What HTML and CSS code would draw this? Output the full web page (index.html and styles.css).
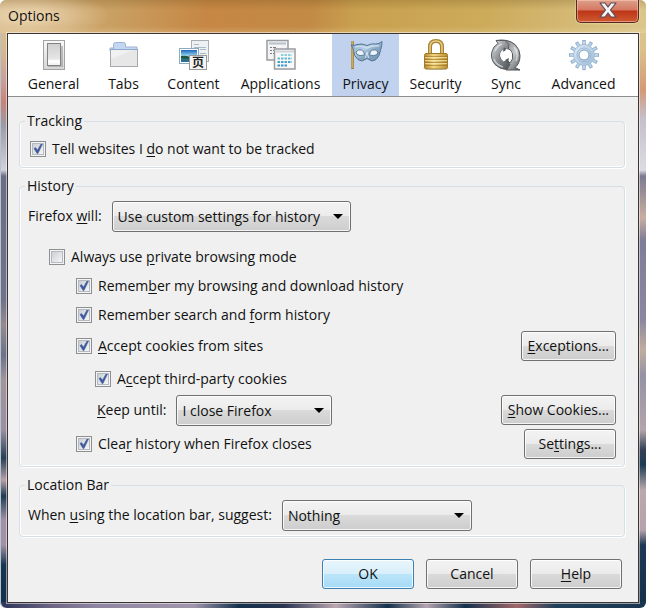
FILE: index.html
```html
<!DOCTYPE html>
<html lang="en">
<head>
  <meta charset="UTF-8" />
  <meta name="viewport" content="width=device-width, initial-scale=1.0" />
  <title>Options</title>
  <link rel="stylesheet" href="styles.css">
</head>
<body>
  <div class="window">
    <header class="titlebar">
      <h1>Options</h1>
      <button type="button" class="close" aria-label="Close">
        <svg width="20" height="18" viewBox="0 0 20 18">
          <path d="M2 2h5l3 4 3-4h5l-5.500 7 5.500 7h-5l-3-4-3 4H2l5.500-7z" fill="#f4f4f4" stroke="#5d4a55" stroke-width="1.200" stroke-linejoin="round"/>
        </svg>
      </button>
    </header>

    <main class="client">
      <nav class="tabs">
        <button type="button" class="tab">
          <svg width="32" height="32" viewBox="0 0 32 32">
            <defs>
              <linearGradient id="plate" x2="0" y2="1"><stop offset="0" stop-color="#f8f8f8"/><stop offset="1" stop-color="#d6d6d6"/></linearGradient>
              <linearGradient id="rocker" x2="0" y2="1"><stop offset="0" stop-color="#cfcfcf"/><stop offset=".7" stop-color="#e6e6e6"/><stop offset=".8" stop-color="#fff"/><stop offset="1" stop-color="#eee"/></linearGradient>
            </defs>
            <rect x="5.500" y="1.500" width="21" height="29" fill="url(#plate)" stroke="#a2a2a2"/>
            <path d="M10 27h14V7" fill="none" stroke="#999" stroke-width="2" opacity=".6"/>
            <rect x="9.500" y="4.500" width="13" height="22" fill="url(#rocker)" stroke="#838383"/>
            <path d="M10 22.500h12" stroke="#fff" stroke-width="2"/>
          </svg>
          <span>General</span>
        </button>
        <button type="button" class="tab">
          <svg width="32" height="32" viewBox="0 0 32 32">
            <path d="M5.500 11V5.500q0-2 2-2h8q2 0 2 2V8h11.500v4h-27V9h3.500z" fill="#c3d7f2" stroke="#9fb3d0"/>
            <rect x="2.500" y="10.500" width="27" height="17" fill="#f1f1f1" stroke="#a5a8ad"/>
            <path d="M3 27V20L25 11h4v16z" fill="#e5e5e5" opacity=".8"/>
            <path d="M2 10.500h28" stroke="#8da9cf"/>
          </svg>
          <span>Tabs</span>
        </button>
        <button type="button" class="tab">
          <svg width="32" height="32" viewBox="0 0 32 32">
            <defs>
              <linearGradient id="photo" x2="0" y2="1"><stop offset="0" stop-color="#1d66bd"/><stop offset=".5" stop-color="#9cdcf2"/><stop offset=".6" stop-color="#2f7a54"/><stop offset="1" stop-color="#2b6da8"/></linearGradient>
            </defs>
            <rect x="13.500" y="1.500" width="17" height="21" fill="#eef1f3" stroke="#a7adb2"/>
            <path d="M16 5.500h5M16 8.500h12M22 10.500h6M22 14.500h6M22 17.500h6" stroke="#a9b8c4"/>
            <rect x="1.500" y="9.500" width="19" height="15" fill="#fff" stroke="#8eaac0"/>
            <rect x="3" y="11" width="16" height="12" fill="url(#photo)"/>
            <path d="M3 17q5-1 8 1t8-2v2q-6 3-16 1z" fill="#1f5547"/>
            <rect x="11.500" y="16.500" width="17" height="14" fill="#f5f5f5" stroke="#999"/>
            <text x="20" y="28" class="glyph" text-anchor="middle">页</text>
          </svg>
          <span>Content</span>
        </button>
        <button type="button" class="tab">
          <svg width="32" height="32" viewBox="0 0 32 32">
            <rect x="2" y="1.500" width="21" height="19.500" fill="#f4f4f4" stroke="#999b9f" stroke-width="1.500"/>
            <path d="M4 4.500h17" stroke="#b9bfc6" stroke-width="2"/>
            <path d="M5 8.500h2M8 8.500h3M5 11.500h2M8 11.500h3M5 14.500h2M8 14.500h3" stroke="#778"/>
            <rect x="9.500" y="10" width="20.500" height="20" fill="#f8f8f8" stroke="#999b9f" stroke-width="1.500"/>
            <path d="M11 12.500h18" stroke="#cfd4da" stroke-width="2"/>
            <g fill="none" stroke-width="2" stroke-dasharray="2.500 1">
              <path d="M16 16h11" stroke="#8bd1dc"/>
              <path d="M12.500 19.500h14.500" stroke="#67bcd2"/>
              <path d="M12.500 23h14.500" stroke="#47a3cb"/>
              <path d="M12.500 26.500h10.500" stroke="#3793c9"/>
            </g>
          </svg>
          <span>Applications</span>
        </button>
        <button type="button" class="tab selected">
          <svg width="34" height="32" viewBox="0 0 34 32">
            <defs>
              <linearGradient id="mask" x2="1" y2="1"><stop offset="0" stop-color="#7f9dbb"/><stop offset=".4" stop-color="#b4cfe3"/><stop offset=".6" stop-color="#86a6c2"/><stop offset="1" stop-color="#7193b2"/></linearGradient>
            </defs>
            <path d="M3.500 2v28" stroke="#96742a" stroke-width="2.500"/>
            <path d="M3.200 2v27" stroke="#e8c566"/>
            <path d="M2 6q3 1 6-.5 5-1.500 10 1 5-2.500 9-1.500 3 0 6-2.500 0 5-1.500 9-1 6-4.500 9-4 3-7 0-2-2-4 0-3 3-7 0-4-3-4.500-9Q4 8 2 6z" fill="url(#mask)" stroke="#547493"/>
            <path d="M6 8q6-2 12 1 6-3 12-2" fill="none" stroke="#d3e4f1" stroke-width="1.500" opacity=".8"/>
            <path d="M7 13q2-3 5.500-2 3 1 3 5-5 1.500-7.500-.5zM20.500 16q0-4 3-5 3.500-1 5.500 2l-1 2.500q-2.500 2-7.500.5z" fill="#eef4fc" stroke="#5a7a99"/>
            <path d="M16.500 19l1.500-6 1.500 6" fill="none" stroke="#d5e5f2"/>
          </svg>
          <span>Privacy</span>
        </button>
        <button type="button" class="tab">
          <svg width="32" height="32" viewBox="0 0 32 32">
            <defs>
              <linearGradient id="brass" x2="1" y2="0"><stop offset="0" stop-color="#b78a2b"/><stop offset=".4" stop-color="#f2d884"/><stop offset="1" stop-color="#b98d2e"/></linearGradient>
            </defs>
            <path d="M10 17V8q0-6 6-6t6 6v9" fill="none" stroke="#a88233" stroke-width="4"/>
            <path d="M10 17V8q0-6 6-6t6 6v9" fill="none" stroke="#ead08a" stroke-width="1.500"/>
            <ellipse cx="16" cy="29.500" rx="13" ry="1.500" fill="#aaa" opacity=".5"/>
            <path d="M6 14.500h20q1.500 0 1.500 2V28q0 2-2 2h-19q-2 0-2-2V16.500q0-2 1.500-2z" fill="url(#brass)" stroke="#a07a28"/>
            <path d="M5 17.500h22M5 20.500h22M5 23.500h22M5 26.500h22" stroke="#997022" opacity=".6"/>
            <path d="M5 18.500h22M5 21.500h22M5 24.500h22" stroke="#faeab0" opacity=".7"/>
          </svg>
          <span>Security</span>
        </button>
        <button type="button" class="tab">
          <svg width="32" height="32" viewBox="0 0 32 32">
            <defs>
              <linearGradient id="steel" x2="1" y2="1"><stop offset="0" stop-color="#e5e7e9"/><stop offset=".5" stop-color="#8b8e92"/><stop offset="1" stop-color="#4b4e52"/></linearGradient>
              <linearGradient id="steel2" x2="1" y2="1"><stop offset="0" stop-color="#6b6e72"/><stop offset=".6" stop-color="#c4c7ca"/><stop offset="1" stop-color="#55585c"/></linearGradient>
            </defs>
            <path d="M6 1.500q12-2 19 4 5 5 5 11 0 8-5 12l5 2.500H16l2-9 2 2q4-4 2.500-9-1-5-6-6V13L9 8l6-5z" fill="url(#steel2)" stroke="#4f5255"/>
            <path d="M6 1.500h9l4 4-1 6-3-2q-5 2-5 7 0 4 4 7l2-3 4 5-3 5q-7 0-12-5-5-6-3-13 1-5 6-8z" fill="url(#steel)" stroke="#5a5d60"/>
            <path d="M5 12q2-5 7-7M4 20q2 6 9 8M24 8q5 6 2 14" fill="none" stroke="#f1f2f3" stroke-width="1.500" opacity=".6"/>
            <circle cx="16" cy="16" r="6" fill="#fff"/>
            <path d="M14 8l-1 5 3-2zM18 24l1-5-4 2z" fill="#55585c"/>
          </svg>
          <span>Sync</span>
        </button>
        <button type="button" class="tab">
          <svg width="32" height="32" viewBox="0 0 32 32">
            <defs>
              <linearGradient id="gear" x2="1" y2="1"><stop offset="0" stop-color="#dfecf8"/><stop offset="1" stop-color="#9dbad6"/></linearGradient>
            </defs>
            <g stroke="#8fadc9" stroke-width="3.500">
              <path d="M16 1v30M1 16h30"/>
              <path d="M16 1v30M1 16h30" transform="rotate(30 16 16)"/>
              <path d="M16 1v30M1 16h30" transform="rotate(60 16 16)"/>
            </g>
            <g stroke="#bdd4e9" stroke-width="2">
              <path d="M16 2v28M2 16h28"/>
              <path d="M16 2v28M2 16h28" transform="rotate(30 16 16)"/>
              <path d="M16 2v28M2 16h28" transform="rotate(60 16 16)"/>
            </g>
            <circle cx="16" cy="16" r="10.500" fill="url(#gear)" stroke="#a5c0d9"/>
            <circle cx="16" cy="16" r="7" fill="none" stroke="#9cb9d4"/>
            <circle cx="16" cy="16" r="5" fill="#fff" stroke="#809fbd"/>
          </svg>
          <span>Advanced</span>
        </button>
      </nav>

      <form class="panel">
        <fieldset>
          <legend>Tracking</legend>
          <div class="row">
            <label class="check"><input type="checkbox" checked /> <span>Tell websites I <u>d</u>o not want to be tracked</span></label>
          </div>
        </fieldset>

        <fieldset>
          <legend>History</legend>
          <div class="row">
            <label for="historyMode">Firefox <u>w</u>ill:</label>
            <select id="historyMode" class="history-mode">
              <option>Use custom settings for history</option>
            </select>
          </div>
          <div class="custom">
            <div class="row">
              <label class="check"><input type="checkbox" /> <span>Always use <u>p</u>rivate browsing mode</span></label>
            </div>
            <div class="details">
              <div class="row">
                <label class="check"><input type="checkbox" checked /> <span>Remem<u>b</u>er my browsing and download history</span></label>
              </div>
              <div class="row">
                <label class="check"><input type="checkbox" checked /> <span>Remember search and <u>f</u>orm history</span></label>
              </div>
              <div class="row accept">
                <label class="check"><input type="checkbox" checked /> <span><u>A</u>ccept cookies from sites</span></label>
                <button type="button" class="btn end"><u>E</u>xceptions...</button>
              </div>
              <div class="cookies">
                <div class="row">
                  <label class="check"><input type="checkbox" checked /> <span>A<u>c</u>cept third-party cookies</span></label>
                </div>
                <div class="row keep">
                  <label for="keepUntil"><u>K</u>eep until:</label>
                  <select id="keepUntil" class="keep-until">
                    <option>I close Firefox</option>
                  </select>
                  <button type="button" class="btn end"><u>S</u>how Cookies...</button>
                </div>
              </div>
              <div class="row">
                <label class="check"><input type="checkbox" checked /> <span>Clea<u>r</u> history when Firefox closes</span></label>
                <button type="button" class="btn end">Se<u>t</u>tings...</button>
              </div>
            </div>
          </div>
        </fieldset>

        <fieldset>
          <legend>Location Bar</legend>
          <div class="row">
            <label for="suggest">When <u>u</u>sing the location bar, suggest:</label>
            <select id="suggest" class="suggest">
              <option>Nothing</option>
            </select>
          </div>
        </fieldset>

        <div class="actions">
          <button type="button" class="btn default">OK</button>
          <button type="button" class="btn">Cancel</button>
          <button type="button" class="btn"><u>H</u>elp</button>
        </div>
      </form>
    </main>
  </div>
</body>
</html>
```

FILE: styles.css
```css
* {
  box-sizing: border-box;
}
body {
  margin: 0;
  font-family: "Open Sans", "Noto Sans CJK SC", sans-serif;
  font-size: 14px;
  line-height: 20px;
  color: #111;
}
button, select {
  font: inherit;
  color: inherit;
}
u {
  text-underline-offset: 2px;
}

/* window frame */
.window {
  display: flex;
  flex-direction: column;
  min-height: 100vh;
  padding: 0 7px 5px;
  border-radius: 6px;
  box-shadow: inset 1px 0 0 #b5c3cc;
  background:
    linear-gradient(90deg, #2b3358 0, #6c6583 8%, #8f86a2 15%, #a096ac 30%, #14304b 37%, #2a3450 44%, #bba8b2 52%, #14304b 60%, #b5a5b0 66%, #14304b 72%, #a0686a 80%, #21405a 86%, #1a3550 100%) bottom / 100% 6px no-repeat,
    linear-gradient(#dcc394 0, #d6b88c 50px, #c9a09a 80px, #c98378 102px, #9c9aa6 125px, #d2d0da 170px, #6b6d86 176px, #71728b 300px, #968b90 325px, #6b728b 355px, #a2959c 380px, #9b8fa2 430px, #263f57 458px, #b7a0a8 480px, #1e3c55 496px, #a192a8 520px, #a192a8 545px, #163550 565px, #14304b 100%) left / 50% 100% no-repeat,
    linear-gradient(#dfc992 0, #dbc08a 50px, #d39a78 90px, #c4bfca 118px, #dddbe2 170px, #7c7a92 176px, #c8aea0 218px, #7e7d98 240px, #8c87a0 320px, #c1ad9f 350px, #9592a5 375px, #b3a4ac 430px, #334055 450px, #1e3c55 465px, #bba8ac 490px, #b5a2ac 530px, #1c3955 545px, #14304b 100%) right / 50% 100% no-repeat;
}
.titlebar {
  display: flex;
  justify-content: space-between;
  align-items: flex-start;
  height: 33px;
  margin: 0 -7px;
  padding: 0 7px 0 0;
  background:
    radial-gradient(ellipse 80px 24px at 30px 16px, rgba(255, 244, 218, .6), transparent),
    linear-gradient(rgba(90, 60, 10, .2), transparent 30%, transparent 80%, rgba(255, 240, 200, .2)),
    linear-gradient(100deg, #d3b382 0, #c99f62 18%, #c68744 32%, #c28a45 48%, #c9a04f 55%, #ccab5b 75%, #dcc68c 100%);
  border-radius: 6px 6px 0 0;
}
.titlebar h1 {
  margin: 6px 0 0 8px;
  font-size: 14px;
  font-weight: normal;
}
.close {
  display: flex;
  justify-content: center;
  align-items: center;
  width: 63px;
  height: 23px;
  padding: 0 0 3px;
  border: 1px solid #562a20;
  border-top: 0;
  border-radius: 0 0 5px 5px;
  background: linear-gradient(#dda08b, #d67862 45%, #bd3518 50%, #cf5a31);
  box-shadow: inset 0 0 0 1px rgba(255, 210, 190, .5), 0 0 2px #fff3d8;
}
.client {
  flex: 1;
  display: flex;
  flex-direction: column;
  border: 1px solid #3e3431;
  background: #f0f0f0;
  box-shadow: 0 0 0 1px rgba(255, 255, 255, .5);
}

/* category tabs */
.tabs {
  display: grid;
  grid-template-columns: 71fr 69fr 71fr 103fr 67fr 73fr 68fr 87fr;
  padding: 0 11px 0 10px;
  border-bottom: 1px solid #8b8d91;
  background: #fff;
}
.tab {
  display: flex;
  flex-direction: column;
  align-items: center;
  gap: 3px;
  padding: 5px 0 2px;
  border: 0;
  background: none;
}
.tab.selected {
  background: #c1d2ee;
}
.glyph {
  font: bold 12px "Noto Sans CJK SC", sans-serif;
  fill: #222;
}

/* groups */
.panel {
  flex: 1;
  display: flex;
  flex-direction: column;
  gap: 8px;
  padding: 14px 13px 13px 11px;
}
fieldset {
  min-width: 0;
  margin: 0;
  padding: 3px 8px 4px;
  border: 1px solid #d5dfe5;
  border-radius: 4px;
  box-shadow: inset 0 -1px 0 #fff, inset 1px 0 0 #fff, 1px 1px 0 #fff;
}
legend {
  margin-left: -3px;
  padding: 0 2px;
}
.row {
  display: flex;
  align-items: center;
  gap: 10px;
  min-height: 29px;
}
.check {
  display: flex;
  align-items: center;
  gap: 6px;
}
.end {
  margin-left: auto;
}
.custom {
  margin: 9px 0 3px 19px;
}
.details {
  padding-left: 27px;
}
.accept {
  margin-top: 2px;
}
.cookies {
  margin: 3px 0 2px;
  padding-left: 19px;
}
.keep {
  padding-left: 4px;
}

/* controls */
input[type="checkbox"] {
  appearance: none;
  flex: none;
  width: 16px;
  height: 16px;
  margin: 0 0 0 2px;
  border: 1px solid #8e8f8f;
  background: linear-gradient(135deg, #cbcfd5, #f6f6f6) center / 10px 10px no-repeat #f4f4f4;
  box-shadow: inset 0 0 0 1px #f4f4f4, inset 0 0 0 2px #b5bac1;
}
input[type="checkbox"]:checked {
  background:
    url("data:image/svg+xml,%3Csvg xmlns='http://www.w3.org/2000/svg' viewBox='0 0 14 14'%3E%3Cpath d='M3 6.500l1.500-1 2 2.500L10 2l1.500 0L7 11.500H6z' fill='%23415a9c' stroke='%23415a9c' stroke-width='.5'/%3E%3C/svg%3E") center / 14px 14px no-repeat,
    linear-gradient(135deg, #cbcfd5, #f6f6f6) center / 10px 10px no-repeat #f4f4f4;
}
.btn, select {
  height: 30px;
  border: 1px solid #707070;
  border-radius: 3px;
  background-color: #ddd;
  background-image: linear-gradient(#f3f3f3, #ebebeb 50%, #dadada 50%, #cdcdcd);
  box-shadow: inset 0 0 0 1px rgba(255, 255, 255, .8);
}
.btn {
  min-width: 92px;
  padding: 0 6px;
}
select {
  appearance: none;
  height: 31px;
  margin: 2px 0 1px;
  padding: 0 28px 0 5px;
  background-image:
    url("data:image/svg+xml,%3Csvg xmlns='http://www.w3.org/2000/svg' viewBox='0 0 10 5'%3E%3Cpath d='M0 0h10L5 5z'/%3E%3C/svg%3E"),
    linear-gradient(#f3f3f3, #ebebeb 50%, #dadada 50%, #cdcdcd);
  background-position: right 7px center, 0 0;
  background-size: 10px 5px, 100% 100%;
  background-repeat: no-repeat;
}
.history-mode {
  width: 239px;
}
.keep-until {
  width: 156px;
}
.suggest {
  width: 190px;
}
.default {
  border-color: #3c7fb1;
  background-image: linear-gradient(#e8f5fc, #d8effb 50%, #bce5fa 50%, #a5daf5);
}
.actions {
  display: flex;
  justify-content: flex-end;
  gap: 12px;
  margin-top: auto;
  padding-right: 3px;
}
```
